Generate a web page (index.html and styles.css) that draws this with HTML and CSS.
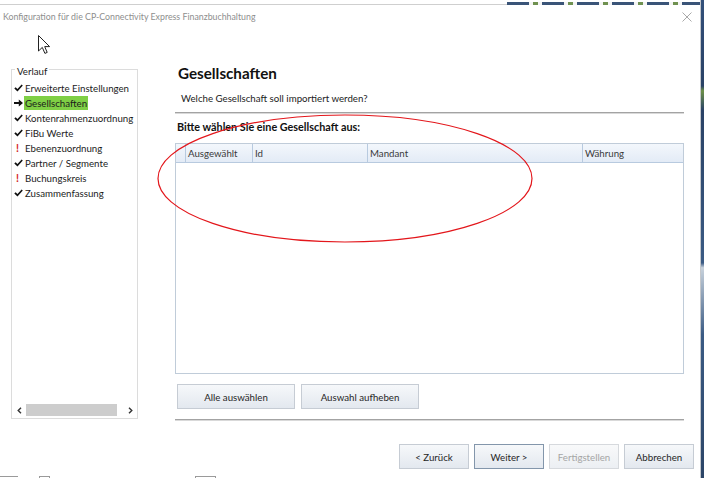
FILE: index.html
```html
<!DOCTYPE html>
<html lang="de">
<head>
    <meta charset="UTF-8">
    <meta name="viewport" content="width=device-width, initial-scale=1.0">
    <title>Konfiguration</title>
    <link rel="stylesheet" href="styles.css">
</head>
<body>
    <div class="screen">
        <div class="window">
            <div class="topline"><span class="edge"></span><span class="desk"></span></div>
            <div class="titlebar">
                <span class="title">Konfiguration für die CP-Connectivity Express Finanzbuchhaltung</span>
                <svg class="close" width="10" height="10" viewBox="0 0 10 10"><path d="M0.5 0.5 L9.5 9.5 M9.5 0.5 L0.5 9.5" stroke="#a9a9a9" stroke-width="1" fill="none"/></svg>
            </div>

            <div class="content">
                <div class="nav">
                    <span class="nav-title">Verlauf</span>
                    <ul class="steps">
                        <li><span class="ico"><svg width="9" height="8" viewBox="0 0 9 8"><path d="M0.3 4.4 L1.6 3.2 L3.5 5 L7.6 0.4 L8.8 1.5 L3.5 7.6 Z" fill="#111"/></svg></span><span class="lbl">Erweiterte Einstellungen</span></li>
                        <li><span class="ico"><svg width="9" height="8" viewBox="0 0 9 8"><path d="M0 3 H4.8 V0.6 L9 4 L4.8 7.4 V5 H0 Z" fill="#111"/></svg></span><span class="lbl current">Gesellschaften</span></li>
                        <li><span class="ico"><svg width="9" height="8" viewBox="0 0 9 8"><path d="M0.3 4.4 L1.6 3.2 L3.5 5 L7.6 0.4 L8.8 1.5 L3.5 7.6 Z" fill="#111"/></svg></span><span class="lbl">Kontenrahmenzuordnung</span></li>
                        <li><span class="ico"><svg width="9" height="8" viewBox="0 0 9 8"><path d="M0.3 4.4 L1.6 3.2 L3.5 5 L7.6 0.4 L8.8 1.5 L3.5 7.6 Z" fill="#111"/></svg></span><span class="lbl">FiBu Werte</span></li>
                        <li><span class="ico warn">!</span><span class="lbl">Ebenenzuordnung</span></li>
                        <li><span class="ico"><svg width="9" height="8" viewBox="0 0 9 8"><path d="M0.3 4.4 L1.6 3.2 L3.5 5 L7.6 0.4 L8.8 1.5 L3.5 7.6 Z" fill="#111"/></svg></span><span class="lbl">Partner / Segmente</span></li>
                        <li><span class="ico warn">!</span><span class="lbl">Buchungskreis</span></li>
                        <li><span class="ico"><svg width="9" height="8" viewBox="0 0 9 8"><path d="M0.3 4.4 L1.6 3.2 L3.5 5 L7.6 0.4 L8.8 1.5 L3.5 7.6 Z" fill="#111"/></svg></span><span class="lbl">Zusammenfassung</span></li>
                    </ul>
                    <div class="hscroll">
                        <span class="arrow"><svg width="5" height="7" viewBox="0 0 5 7"><path d="M4 0.7 L1.2 3.5 L4 6.3" stroke="#333" stroke-width="1.4" fill="none"/></svg></span>
                        <span class="track"><span class="thumb"></span></span>
                        <span class="arrow"><svg width="5" height="7" viewBox="0 0 5 7"><path d="M1 0.7 L3.8 3.5 L1 6.3" stroke="#333" stroke-width="1.4" fill="none"/></svg></span>
                    </div>
                </div>

                <div class="page">
                    <h1>Gesellschaften</h1>
                    <p class="sub">Welche Gesellschaft soll importiert werden?</p>
                    <div class="sep"></div>
                    <p class="prompt">Bitte wählen Sie eine Gesellschaft aus:</p>
                    <div class="grid">
                        <div class="grid-head">
                            <span class="cell"></span>
                            <span class="cell">Ausgewählt</span>
                            <span class="cell">Id</span>
                            <span class="cell">Mandant</span>
                            <span class="cell last">Währung</span>
                        </div>
                    </div>
                    <div class="pick">
                        <button class="btn wide">Alle auswählen</button>
                        <button class="btn wide">Auswahl aufheben</button>
                    </div>
                    <div class="sep"></div>
                </div>
            </div>

            <div class="footer">
                <button class="btn">&lt; Zurück</button>
                <button class="btn focus">Weiter &gt;</button>
                <button class="btn disabled">Fertigstellen</button>
                <button class="btn">Abbrechen</button>
            </div>
            <div class="taskbits"><span class="b1"></span><span class="b2"></span><span class="b3"></span></div>
        </div>
        <div class="desktop-edge"></div>

        <svg class="markup" width="704" height="478" viewBox="0 0 704 478">
            <ellipse cx="345" cy="178.5" rx="187" ry="63.5" fill="none" stroke="#e3161b" stroke-width="1.2"/>
        </svg>
        <svg class="cursor" width="13" height="20" viewBox="0 0 13 20">
            <path d="M0.5 0.5 V16 L4.3 12.4 L6.9 18.4 L9.2 17.4 L6.7 11.6 L11.6 11.6 Z" fill="#fff" stroke="#222" stroke-width="1" stroke-linejoin="round"/>
        </svg>
    </div>
</body>
</html>
```
FILE: styles.css
```css
* {
    box-sizing: border-box;
}
body {
    margin: 0;
    width: 704px;
    height: 478px;
    overflow: hidden;
    background: #fff;
    font-family: Lato, "Liberation Sans", sans-serif;
    font-size: 9.7px;
    color: #1b1b1b;
}
.screen {
    position: relative;
    display: flex;
    height: 478px;
}
.window {
    width: 701px;
    border-right: 1px solid #c4c7cb;
    display: flex;
    flex-direction: column;
}
.desktop-edge {
    width: 3px;
    background: linear-gradient(to bottom, #33507a 0, #2a4266 18%, #6d9148 19%, #2a4266 23%, #3b5b84 55%, #c8d2dc 56%, #3b5b84 70%, #2c4567 100%);
}
.topline {
    height: 5px;
    display: flex;
}
.topline .edge {
    flex: 1;
    border-bottom: 1px solid #cfcfcf;
}
.topline .desk {
    width: 193px;
    height: 3px;
    margin-top: 2px;
    background: repeating-linear-gradient(to right, #3a5478 0, #3a5478 22px, #f4f4f4 22px, #f4f4f4 26px, #6f9150 26px, #6f9150 31px, #f4f4f4 31px, #f4f4f4 35px);
}
.titlebar {
    height: 23px;
    display: flex;
    align-items: center;
    padding-left: 3px;
}
.title {
    font-size: 8.8px;
    color: #8e8e8e;
}
.close {
    margin-left: auto;
    margin-right: 8px;
}
.content {
    height: 416px;
    display: flex;
}

/* left step list */
.nav {
    margin: 41px 0 0 11px;
    width: 127px;
    height: 350px;
    border: 1px solid #dcdcdc;
    display: flex;
    flex-direction: column;
}
.nav-title {
    align-self: flex-start;
    margin: -6px 0 0 3px;
    padding: 0 2px;
    line-height: 14px;
    background: #fff;
    color: #222;
}
.steps {
    list-style: none;
    margin: 2px 0 0;
    padding: 0 0 0 2px;
    overflow: hidden;
}
.steps li {
    height: 15px;
    display: flex;
    align-items: center;
    white-space: nowrap;
}
.ico {
    width: 10px;
    flex: none;
    display: flex;
    align-items: center;
}
.ico.warn {
    padding-left: 2px;
    color: #d41f1f;
    font-weight: 700;
    font-size: 10.5px;
}
.lbl {
    padding: 0 1px;
    line-height: 14px;
}
.lbl.current {
    background: #7fcf45;
}
.hscroll {
    margin-top: auto;
    margin-bottom: 2px;
    height: 12px;
    display: flex;
    align-items: center;
}
.arrow {
    width: 14px;
    display: flex;
    justify-content: center;
}
.track {
    flex: 1;
    height: 12px;
}
.thumb {
    display: block;
    width: 91px;
    height: 12px;
    background: #cdcdcd;
}

/* main page */
.page {
    margin-left: 37px;
    width: 509px;
    padding-top: 35px;
}
h1 {
    margin: 0;
    padding-left: 3px;
    font-size: 15.2px;
    font-weight: 700;
    line-height: 20px;
    color: #111;
}
.sub {
    margin: 8px 0 0;
    padding-left: 6px;
    line-height: 14px;
}
.sep {
    margin-top: 7px;
    height: 2px;
    border-top: 1px solid #a3a3a3;
    border-bottom: 1px solid #d9d9d9;
}
.prompt {
    margin: 6px 0 0;
    padding-left: 2px;
    font-size: 10.8px;
    font-weight: 700;
    line-height: 14px;
    color: #111;
}
.grid {
    margin-top: 9px;
    height: 231px;
    border: 1px solid #c0ccd9;
}
.grid-head {
    display: grid;
    grid-template-columns: 10px 67px 115px 215px 1fr;
    height: 19px;
    border-bottom: 1px solid #b8cadf;
    background: linear-gradient(to bottom, #f3f7fc, #e3ebf6);
}
.cell {
    border-right: 1px solid #b8cadf;
    padding-left: 2px;
    line-height: 18px;
    color: #3a3a3a;
}
.cell.last {
    border-right: none;
}
.pick {
    margin-top: 10px;
    padding-left: 2px;
    display: flex;
    gap: 6px;
}
.pick + .sep {
    margin-top: 10px;
}
.btn {
    width: 70px;
    height: 25px;
    padding: 0;
    border: 1px solid #c6ccd4;
    background: linear-gradient(to bottom, #f6f8fa, #e3e8ef);
    font-family: inherit;
    font-size: 9.7px;
    color: #262626;
}
.btn.wide {
    width: 118px;
}
.btn.focus {
    border-color: #8396ab;
}
.btn.disabled {
    color: #a5a5a5;
    border-color: #d6d9dd;
    background: linear-gradient(to bottom, #f8f9fa, #eceff3);
}
.footer {
    display: flex;
    justify-content: flex-end;
    gap: 5px;
    padding-right: 6px;
}
.taskbits {
    margin-top: 7px;
    height: 2px;
    display: flex;
}
.taskbits span {
    height: 2px;
    border-top: 1px solid #9a9a9a;
}
.taskbits .b1 {
    width: 18px;
}
.taskbits .b2 {
    width: 11px;
    margin-left: 21px;
    border-left: 1px solid #9a9a9a;
    border-right: 1px solid #9a9a9a;
}
.taskbits .b3 {
    width: 21px;
    margin-left: 145px;
    border-left: 1px solid #9a9a9a;
    border-right: 1px solid #9a9a9a;
}

/* drawn on top of the screenshot */
.markup {
    position: absolute;
    left: 0;
    top: 0;
    pointer-events: none;
}
.cursor {
    position: absolute;
    left: 38px;
    top: 35px;
}
```
